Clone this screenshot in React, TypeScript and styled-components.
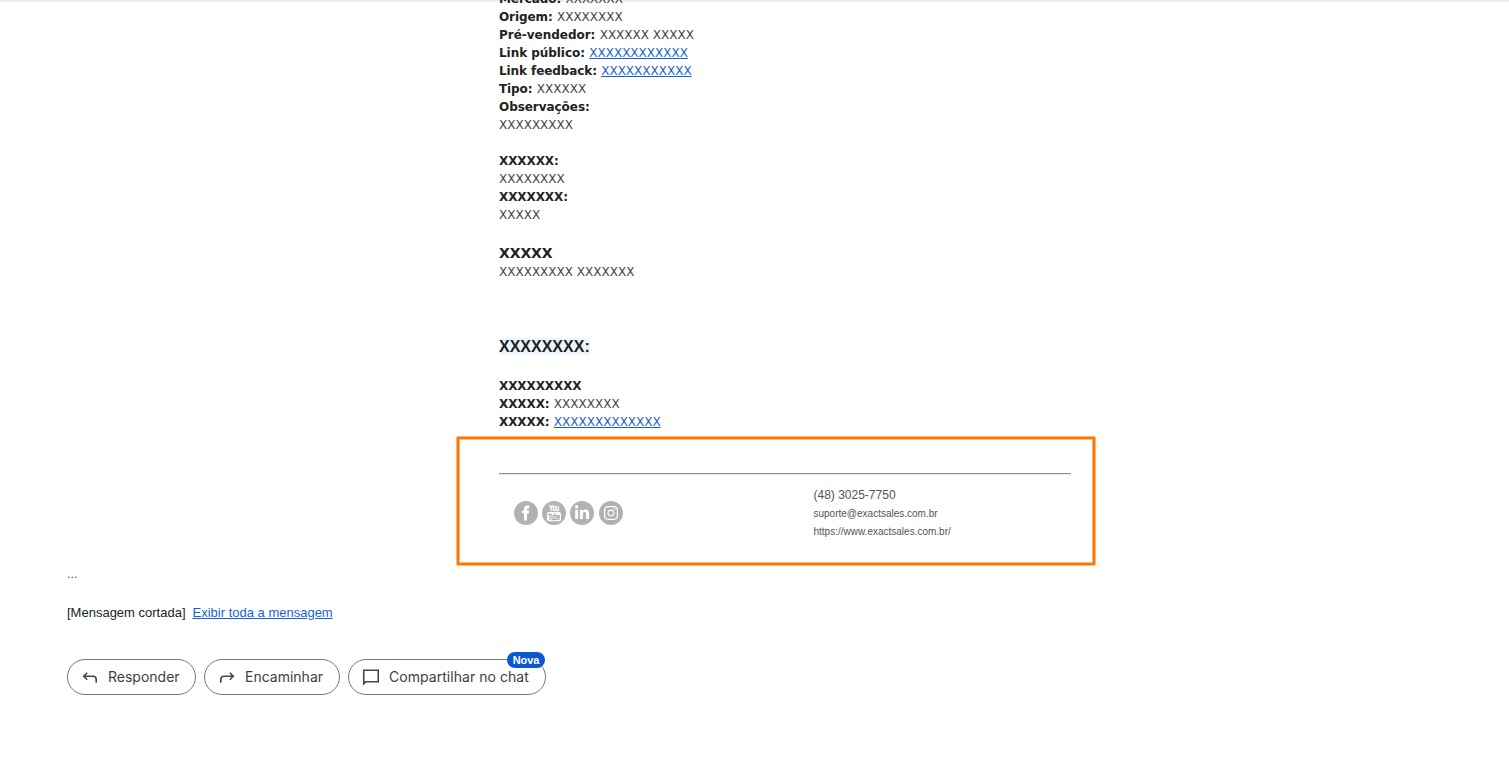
import React from "react";
import styled, { createGlobalStyle } from "styled-components";
import { FaInstagram, FaLinkedinIn } from "react-icons/fa";

const GlobalStyle = createGlobalStyle`
	* {
		box-sizing: border-box;
	}

	body {
		margin: 0;
		background-color: #fff;
		overflow: hidden;
	}
`;

const Page = styled.main`
	display: flow-root;
	height: 765px;
	overflow: hidden;
	background: linear-gradient(#ebebeb 0 1px, #f5f5f5 1px 2px, #fff 2px);
	font-family: "Liberation Sans", Arial, sans-serif;
	color: #222;
`;

const MessageBody = styled.section`
	margin: -10px 0 0 499px;
	font-family: Verdana, "DejaVu Sans", sans-serif;
	font-size: 12px;
	line-height: 18px;
	color: #444;
`;

const Line = styled.div<{ $gap?: number }>`
	height: 18px;
	margin-top: ${({ $gap }) => $gap ?? 0}px;
	white-space: nowrap;
`;

const Label = styled.b<{ $spacing?: number }>`
	margin-right: 0.5px;
	color: #222;
	letter-spacing: ${({ $spacing }) => $spacing ?? -0.09}px;
`;

const Link = styled.a`
	color: #1a5fd8;
	text-decoration: underline;
`;

const Title = styled.h3`
	margin: 20px 0 0;
	height: 19px;
	font-size: 14px;
	line-height: 19px;
	letter-spacing: -0.1px;
	color: #222;
`;

const SectionTitle = styled.h2`
	margin: 56px 0 0;
	height: 20px;
	font-family: "Liberation Sans", Arial, sans-serif;
	font-size: 16px;
	line-height: 20px;
	color: #222;
`;

const Highlight = styled.span`
	background-color: #edf6fe;
`;

const Signature = styled.footer`
	width: 638px;
	height: 128px;
	margin: 6px 0 0 457px;
	padding: 34px 22px 0 40px;
	border: 2px solid #ff7300;
	border-radius: 1px;
	box-shadow: 0 0 0 1px rgba(255, 115, 0, 0.5), inset 0 0 0 1px rgba(255, 115, 0, 0.5);
`;

const Divider = styled.hr`
	height: 2px;
	margin: 0;
	border: 0;
	border-top: 1px solid #929292;
	border-bottom: 1px solid #e6e6e6;
	width: 572px;
`;

const SignatureColumns = styled.div`
	display: grid;
	grid-template-columns: 314.5px 1fr;
`;

const SocialList = styled.div`
	display: flex;
	gap: 4px;
	padding: 26px 0 0 15px;
`;

const SocialIcon = styled.span<{ $offset?: number }>`
	display: flex;
	align-items: center;
	justify-content: center;
	width: 24px;
	height: 24px;
	margin-left: ${({ $offset }) => $offset ?? 0}px;
	border-radius: 50%;
	background-color: #b1b1b1;
	color: #fff;
`;

const Contact = styled.address`
	padding-top: 10px;
	font-style: normal;
	font-size: 10px;
	line-height: 18px;
	color: #555;
`;

const Phone = styled.div`
	height: 20px;
	font-size: 12px;
	line-height: 20px;
`;

const Ellipsis = styled.div`
	margin: 0 0 0 67px;
	height: 20px;
	font-size: 12.5px;
	line-height: 18px;
	color: #555;
`;

const Clipped = styled.div`
	display: flex;
	gap: 7px;
	margin: 19px 0 0 67px;
	height: 18px;
	font-size: 13px;
	line-height: 18px;
`;

const Actions = styled.div`
	display: flex;
	gap: 8px;
	margin: 37px 0 0 67px;
`;

const ActionButton = styled.button<{ $width: number; $spacing?: number }>`
	position: relative;
	display: flex;
	align-items: center;
	gap: 8px;
	width: ${({ $width }) => $width}px;
	height: 36px;
	padding: 0 0 1px 12px;
	border: 1px solid #747775;
	border-radius: 18px;
	background-color: #fff;
	font-family: "Google Sans", Inter, sans-serif;
	font-size: 14px;
	letter-spacing: ${({ $spacing }) => $spacing ?? 0}px;
	color: #3c3f3e;
	white-space: nowrap;
`;

const Badge = styled.span`
	position: absolute;
	top: -8px;
	right: 0;
	width: 38px;
	height: 16px;
	border-radius: 8px;
	background-color: #0b57d0;
	font-family: "Liberation Sans", Arial, sans-serif;
	font-size: 11px;
	font-weight: 700;
	line-height: 16px;
	letter-spacing: -0.1px;
	text-align: center;
	color: #fff;
`;

const FacebookIcon: React.FC = () => (
	<svg width="24" height="24" viewBox="0 0 24 24" fill="#fff">
		<path d="M10 19.5v-7H8.2V9.6H10V8c0-2.4 1.2-3.4 3.2-3.4h2v2.8h-1.3c-.7 0-.9.3-.9.9v1.3h2.2l-.3 2.9H13v7z" />
	</svg>
);

const YouTubeIcon: React.FC = () => (
	<svg width="24" height="24" viewBox="0 0 24 24" fill="#fff">
		<text x="7" y="10" fontSize="8.5" stroke="#fff" strokeWidth="0.5" textLength="10" lengthAdjust="spacingAndGlyphs">
			You
		</text>
		<rect x="5" y="11" width="14" height="9.3" rx="2" />
		<text x="6.2" y="18.8" fontSize="8.5" fill="#a3a3a3" stroke="#a3a3a3" strokeWidth="0.4" textLength="11.8" lengthAdjust="spacingAndGlyphs">
			Tube
		</text>
	</svg>
);

const ReplyIcon: React.FC = () => (
	<svg width="20" height="20" viewBox="0 0 20 20" fill="none" stroke="#444746" strokeWidth="1.6">
		<path d="M7.2 5.7 3.7 9.2l3.5 3.5M4 9.2h9a3.2 3.2 0 0 1 3.2 3.2v3.3" />
	</svg>
);

const ForwardIcon: React.FC = () => (
	<svg width="20" height="20" viewBox="0 0 20 20" fill="none" stroke="#444746" strokeWidth="1.6">
		<path d="m12.8 5.7 3.5 3.5-3.5 3.5M16 9.2H7a3.2 3.2 0 0 0-3.2 3.2v3.3" />
	</svg>
);

const ChatIcon: React.FC = () => (
	<svg width="20" height="20" viewBox="0 0 20 20" fill="none" stroke="#444746" strokeWidth="1.6">
		<path d="M2.75 16.8V3.25h14.5v11.5H4.8z" />
	</svg>
);

const App: React.FC = () => {
	return (
		<Page>
			<GlobalStyle />
			<MessageBody>
				<Line>
					<Label>Mercado:</Label> XXXXXXX
				</Line>
				<Line>
					<Label>Origem:</Label> XXXXXXXX
				</Line>
				<Line>
					<Label $spacing={-0.02}>Pré-vendedor:</Label> XXXXXX XXXXX
				</Line>
				<Line>
					<Label $spacing={-0.05}>Link público:</Label> <Link>XXXXXXXXXXXX</Link>
				</Line>
				<Line>
					<Label>Link feedback:</Label> <Link>XXXXXXXXXXX</Link>
				</Line>
				<Line>
					<Label>Tipo:</Label> XXXXXX
				</Line>
				<Line>
					<Label $spacing={-0.05}>Observações:</Label>
				</Line>
				<Line>XXXXXXXXX</Line>
				<Line $gap={18}>
					<Label>XXXXXX:</Label>
				</Line>
				<Line>XXXXXXXX</Line>
				<Line>
					<Label>XXXXXXX:</Label>
				</Line>
				<Line>XXXXX</Line>
				<Title>XXXXX</Title>
				<Line>XXXXXXXXX XXXXXXX</Line>
				<SectionTitle>
					<Highlight>XXXXXXXX:</Highlight>
				</SectionTitle>
				<Line $gap={20}>
					<Label>XXXXXXXXX</Label>
				</Line>
				<Line>
					<Label>XXXXX:</Label> XXXXXXXX
				</Line>
				<Line>
					<Label>XXXXX:</Label> <Link>XXXXXXXXXXXXX</Link>
				</Line>
			</MessageBody>
			<Signature>
				<Divider />
				<SignatureColumns>
					<SocialList>
						<SocialIcon>
							<FacebookIcon />
						</SocialIcon>
						<SocialIcon>
							<YouTubeIcon />
						</SocialIcon>
						<SocialIcon>
							<FaLinkedinIn size={16} />
						</SocialIcon>
						<SocialIcon $offset={1}>
							<FaInstagram size={16} />
						</SocialIcon>
					</SocialList>
					<Contact>
						<Phone>(48) 3025-7750</Phone>
						<div>suporte@exactsales.com.br</div>
						<div>https://www.exactsales.com.br/</div>
					</Contact>
				</SignatureColumns>
			</Signature>
			<Ellipsis>...</Ellipsis>
			<Clipped>
				<span>[Mensagem cortada]</span>
				<Link>Exibir toda a mensagem</Link>
			</Clipped>
			<Actions>
				<ActionButton $width={129}>
					<ReplyIcon />
					Responder
				</ActionButton>
				<ActionButton $width={136}>
					<ForwardIcon />
					Encaminhar
				</ActionButton>
				<ActionButton $width={198} $spacing={0.04}>
					<ChatIcon />
					Compartilhar no chat
					<Badge>Nova</Badge>
				</ActionButton>
			</Actions>
		</Page>
	);
};

export default App;
